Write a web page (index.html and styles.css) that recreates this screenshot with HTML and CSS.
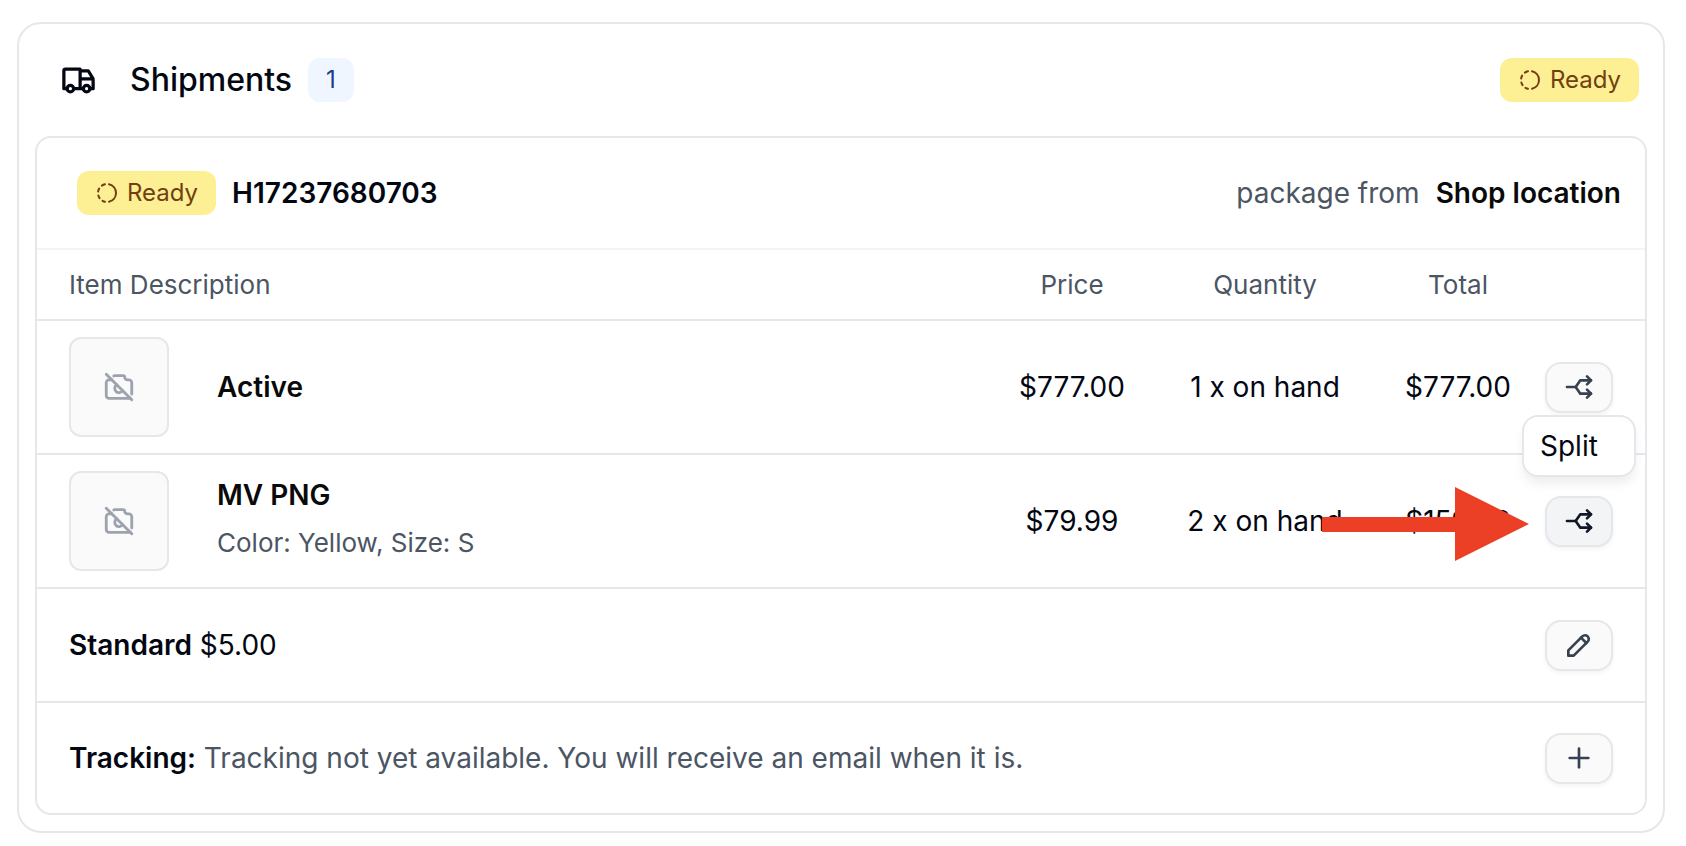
FILE: index.html
```
<!DOCTYPE html>
<html lang="en">
<head>
    <meta charset="UTF-8">
    <meta name="viewport" content="width=device-width, initial-scale=1.0">
    <title>Shipments</title>
    <link rel="stylesheet" href="styles.css">
</head>
<body>
    <!-- icons shared by several rows -->
    <svg class="sprite" aria-hidden="true">
        <symbol id="icon-progress" viewBox="0 0 24 24">
            <path d="M10 20.777a8.942 8.942 0 0 1 -2.48 -.969"/>
            <path d="M14 3.223a9.003 9.003 0 0 1 0 17.554"/>
            <path d="M4.579 17.093a8.961 8.961 0 0 1 -1.227 -2.592"/>
            <path d="M3.124 10.5c.16 -.95 .468 -1.85 .9 -2.675l.169 -.305"/>
            <path d="M6.907 4.579a8.954 8.954 0 0 1 3.093 -1.356"/>
        </symbol>
        <symbol id="icon-camera-off" viewBox="0 0 24 24">
            <path d="M8.297 4.289a.997 .997 0 0 1 .703 -.289h6a1 1 0 0 1 1 1a2 2 0 0 0 2 2h1a2 2 0 0 1 2 2v8m-1.187 2.828c-.249 .11 -.524 .172 -.813 .172h-14a2 2 0 0 1 -2 -2v-9a2 2 0 0 1 2 -2h1c.298 0 .58 -.065 .834 -.181"/>
            <path d="M10.422 10.448a3 3 0 1 0 4.15 4.098"/>
            <path d="M3 3l18 18"/>
        </symbol>
        <symbol id="icon-split" viewBox="0 0 24 24">
            <path d="M21 17h-8l-3.5 -5h-6.5"/>
            <path d="M21 7h-8l-3.495 5"/>
            <path d="M18 10l3 -3l-3 -3"/>
            <path d="M18 20l3 -3l-3 -3"/>
        </symbol>
    </svg>

    <section class="card">
        <header class="card-header">
            <svg class="icon icon-truck" viewBox="0 0 24 24" aria-hidden="true">
                <path d="M7 17m-2 0a2 2 0 1 0 4 0a2 2 0 1 0 -4 0"/>
                <path d="M17 17m-2 0a2 2 0 1 0 4 0a2 2 0 1 0 -4 0"/>
                <path d="M5 17h-2v-11a1 1 0 0 1 1 -1h9v12m-4 0h6m4 0h2v-6h-8m0 -5h5l3 5"/>
            </svg>
            <h1>Shipments</h1>
            <span class="badge badge-count">1</span>
            <span class="badge badge-ready push-right"><svg class="icon"><use href="#icon-progress"/></svg>Ready</span>
        </header>

        <div class="shipment">
            <div class="shipment-header">
                <span class="badge badge-ready"><svg class="icon"><use href="#icon-progress"/></svg>Ready</span>
                <strong>H17237680703</strong>
                <span class="muted push-right">package from</span>
                <strong class="dark">Shop location</strong>
            </div>

            <table>
                <thead>
                    <tr>
                        <th class="col-item" scope="col">Item Description</th>
                        <th class="col-price" scope="col">Price</th>
                        <th class="col-quantity" scope="col">Quantity</th>
                        <th class="col-total" scope="col">Total</th>
                        <td class="col-action"></td>
                    </tr>
                </thead>
                <tbody>
                    <tr>
                        <td class="col-item">
                            <div class="item">
                                <div class="thumb"><svg class="icon"><use href="#icon-camera-off"/></svg></div>
                                <strong class="dark">Active</strong>
                            </div>
                        </td>
                        <td>$777.00</td>
                        <td>1 x on hand</td>
                        <td>$777.00</td>
                        <td class="col-action">
                            <button type="button" class="btn" aria-label="Split"><svg class="icon"><use href="#icon-split"/></svg></button>
                        </td>
                    </tr>
                    <tr>
                        <td class="col-item">
                            <div class="item">
                                <div class="thumb"><svg class="icon"><use href="#icon-camera-off"/></svg></div>
                                <div class="item-text">
                                    <strong class="dark">MV PNG</strong>
                                    <div class="variant">Color: Yellow, Size: S</div>
                                </div>
                            </div>
                        </td>
                        <td>$79.99</td>
                        <td>2 x on hand</td>
                        <td>$159.98</td>
                        <td class="col-action">
                            <div class="action">
                                <button type="button" class="btn btn-active" aria-label="Split" aria-describedby="split-tip"><svg class="icon"><use href="#icon-split"/></svg></button>
                                <div class="tooltip" id="split-tip" role="tooltip">Split</div>
                                <svg class="pointer" viewBox="0 0 207 74" aria-hidden="true">
                                    <path d="M0 30H133V0L207 37L133 74V45H0Z"/>
                                </svg>
                            </div>
                        </td>
                    </tr>
                </tbody>
            </table>

            <div class="row row-method">
                <p><strong>Standard</strong> $5.00</p>
                <button type="button" class="btn" aria-label="Edit shipping method">
                    <svg class="icon" viewBox="0 0 24 24">
                        <path d="M4 20h4l10.5 -10.5a2.828 2.828 0 1 0 -4 -4l-10.5 10.5v4"/>
                        <path d="M13.5 6.5l4 4"/>
                    </svg>
                </button>
            </div>
            <div class="row">
                <p><strong>Tracking:</strong> <span class="muted">Tracking not yet available. You will receive an email when it is.</span></p>
                <button type="button" class="btn" aria-label="Add tracking">
                    <svg class="icon" viewBox="0 0 24 24">
                        <path d="M12 5v14"/>
                        <path d="M5 12h14"/>
                    </svg>
                </button>
            </div>
        </div>
    </section>
</body>
</html>
```
FILE: styles.css
```
* {
    box-sizing: border-box;
}
body {
    margin: 0;
    padding: 22px 21px 12px 17px;
    background: #fff;
    color: #030712;
    font-family: Inter, "Liberation Sans", sans-serif;
    font-size: 28px;
    line-height: 40px;
}
h1, p {
    margin: 0;
}
strong {
    font-weight: 600;
}
.sprite {
    position: absolute;
    width: 0;
    height: 0;
}
.icon {
    display: block;
    flex: none;
    width: 32px;
    height: 32px;
    fill: none;
    stroke: currentColor;
    stroke-width: 2;
    stroke-linecap: round;
    stroke-linejoin: round;
}
.muted {
    color: #4b5563;
}
.dark {
    color: #0a0a0a;
}
.push-right {
    margin-left: auto;
}

/* outer card */
.card {
    padding: 0 16px 16px;
    border: 2px solid #e5e7eb;
    border-radius: 24px;
}
.card-header {
    display: flex;
    align-items: center;
    gap: 16px;
    height: 112px;
    padding: 0 8px 0 24px;
}
.card-header h1 {
    font-size: 32px;
    font-weight: 500;
}
.icon-truck {
    width: 39px;
    height: 39px;
    margin-right: 16px;
}

/* badges */
.badge {
    display: flex;
    align-items: center;
    gap: 8px;
    height: 44px;
    padding: 0 18px;
    border-radius: 12px;
    font-size: 24px;
}
.badge .icon {
    width: 24px;
    height: 24px;
}
.badge-count {
    background: #eff6ff;
    color: #1e3a8a;
}
.badge-ready {
    background: #fcef94;
    color: #713f12;
}

/* shipment */
.shipment {
    border: 2px solid #e5e7eb;
    border-radius: 16px;
}
.shipment-header {
    display: flex;
    align-items: center;
    gap: 16px;
    height: 112px;
    padding: 0 24px 0 40px;
    border-bottom: 2px solid #f3f4f6;
}

table {
    width: 100%;
    table-layout: fixed;
    border-spacing: 0;
}
th, td {
    padding: 16px 0;
    border-bottom: 2px solid #e5e7eb;
    text-align: center;
}
th {
    padding: 15px 0 14px;
    color: #4b5563;
    font-size: 26px;
    font-weight: 400;
}
thead td {
    padding: 0;
}
.col-item {
    padding-left: 32px;
    text-align: left;
}
.col-price, .col-total {
    width: 174px;
}
.col-quantity {
    width: 212px;
}
.col-action {
    width: 100px;
    padding-right: 32px;
}
.item {
    display: flex;
    align-items: center;
    gap: 48px;
}
.item-text {
    padding-bottom: 4px;
}
.variant {
    margin-top: 8px;
    color: #4b5563;
    font-size: 26px;
}
.thumb {
    display: flex;
    align-items: center;
    justify-content: center;
    flex: none;
    width: 100px;
    height: 100px;
    border: 2px solid #e5e7eb;
    border-radius: 12px;
    background: #fafafa;
    color: #9ca3af;
}
.thumb .icon {
    width: 34px;
    height: 34px;
}

/* buttons */
.btn {
    display: flex;
    align-items: center;
    justify-content: center;
    width: 68px;
    height: 51px;
    padding: 0;
    border: 2px solid #e5e7eb;
    border-radius: 16px;
    background: #fafafa;
    box-shadow: 0 2px 4px rgba(0, 0, 0, 0.05);
    color: #374151;
    cursor: pointer;
}
.btn:hover, .btn-active {
    background: #f3f4f6;
    color: #111827;
}
.action {
    position: relative;
}
.tooltip {
    position: absolute;
    bottom: 70px;
    left: -23px;
    width: 114px;
    padding: 9px 16px;
    border: 2px solid #e5e7eb;
    border-radius: 16px;
    background: #fff;
    box-shadow: 0 8px 12px -2px rgba(0, 0, 0, 0.08);
    text-align: left;
}
/* red arrow that points at the split button */
.pointer {
    position: absolute;
    top: -9px;
    right: 84px;
    width: 207px;
    height: 74px;
    fill: #eb4026;
}

/* method and tracking */
.row {
    display: flex;
    align-items: center;
    justify-content: space-between;
    height: 110px;
    padding: 0 32px;
}
.row-method {
    height: 114px;
    border-bottom: 2px solid #e5e7eb;
}
```
